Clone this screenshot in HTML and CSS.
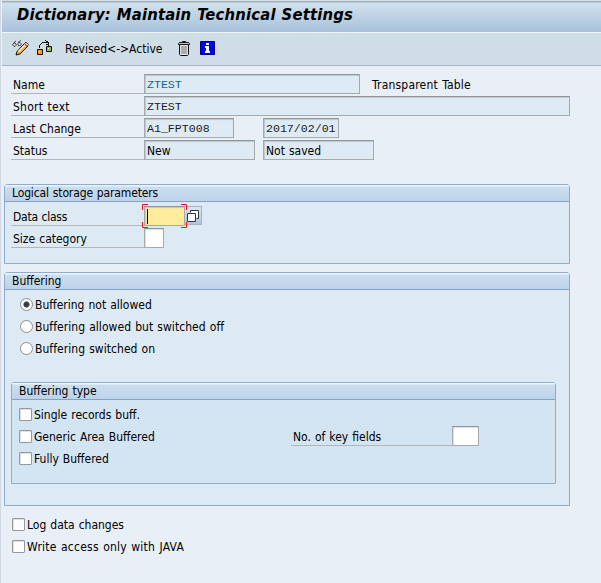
FILE: index.html
```html
<!DOCTYPE html>
<html lang="en">
<head>
<meta charset="utf-8">
<title>Dictionary: Maintain Technical Settings</title>
<link rel="stylesheet" href="styles.css">
</head>
<body>
<main class="window">
  <header class="titlebar"><h1>Dictionary: Maintain Technical Settings</h1></header>
  <nav class="toolbar">
    <svg class="icon edit" width="18" height="16" viewBox="0 0 18 16">
      <path d="M1 5.500a1.500 1.500 0 1 0 3-1.500 1.500 1.500 0 1 0-3 1.500M6 5a1.500 1.500 0 1 0 3-1.500A1.500 1.500 0 1 0 6 5M1.500 3L4 1M6 2.500L9 .5" fill="none" stroke="#333" stroke-width=".9"/>
      <path d="M5 11.500L12.500 3.500l3 3L8 14l-4 1z" fill="#ffa531" stroke="#111"/>
      <path d="M6.500 11.500l7-7" stroke="#fff6cc" stroke-width="1.500"/>
      <path d="M12.500 3.500L14 2l2.500 2.500-1.500 2z" fill="#f3c9c4" stroke="#444"/>
    </svg>
    <svg class="icon relate" width="16" height="16" viewBox="0 0 16 16">
      <path d="M2.500 8V5.500l3-3H11M8.500.5l3 2v3M11.500 5.500L9.500 4" fill="none" stroke="#111" shape-rendering="crispEdges"/>
      <path d="M.5 9.500h5v5h-5z" fill="#ff9e18" stroke="#111"/>
      <path d="M2 11h1v1H2z" fill="#ffe9b0"/>
      <path d="M9.500 6.500h5v5h-5z" fill="#9dba58" stroke="#111"/>
      <path d="M11 8h1v1h-1z" fill="#e9f5c0"/>
    </svg>
    <button class="toggle">Revised&lt;-&gt;Active</button>
    <svg class="icon trash" width="12" height="15" viewBox="0 0 12 15">
      <path d="M1.500 3.500h9v10l-1 1h-7l-1-1z" fill="#e4e4e4" stroke="#111"/>
      <path d="M.5 2.500l1-1h9l1 1v1H.5zM4.500 1.500v-1h3v1" fill="#ccc" stroke="#111"/>
      <path d="M4 5v8M6 5v8M8 5v8" stroke="#777"/>
    </svg>
    <svg class="icon info" width="15" height="14" viewBox="0 0 15 14">
      <path d="M.5.5h14v13H.5z" fill="#00f" stroke="#000080"/>
      <path d="M6 2h3v2H6zM5 5h4v5h1v2H5v-2h1V7H5z" fill="#fff"/>
    </svg>
  </nav>

  <section class="details">
    <div class="row"><label class="label">Name</label><span class="field mono link w-name">ZTEST</span><span class="note">Transparent Table</span></div>
    <div class="row"><label class="label wide">Short text</label><span class="field mono w-text">ZTEST</span></div>
    <div class="row"><label class="label">Last Change</label><span class="field mono w-user">A1_FPT008</span><span class="field mono w-date">2017/02/01</span></div>
    <div class="row"><label class="label">Status</label><span class="field w-status">New</span><span class="field w-saved">Not saved</span></div>
  </section>

  <section class="group storage">
    <h2>Logical storage parameters</h2>
    <div class="group-body">
      <div class="row"><label class="label tight">Data class</label><span class="field focused"><i class="caret"></i>
        <svg class="corners" width="45" height="25" viewBox="0 0 45 25"><path d="M.5 6V.5H6M39 .5h5.500V6M.5 18v5.500H6M39 23.500h5.500V18" fill="none" stroke="#e11422"/></svg></span><button class="match" aria-label="Search"><svg width="12" height="12" viewBox="0 0 12 12"><path d="M3.500 2.500v-2h8v8h-2" fill="#fff" stroke="#333"/><path d="M.5 3.500h8v8h-8z" fill="#fff" stroke="#333"/></svg></button></div>
      <div class="row"><label class="label">Size category</label><span class="field entry w-size"></span></div>
    </div>
  </section>

  <section class="group buffering">
    <h2>Buffering</h2>
    <div class="group-body">
      <label class="option"><i class="radio on"></i><span>Buffering not allowed</span></label>
      <label class="option"><i class="radio"></i><span class="spaced">Buffering allowed but switched off</span></label>
      <label class="option"><i class="radio"></i><span class="spaced">Buffering switched on</span></label>
      <section class="group inner">
        <h2>Buffering type</h2>
        <div class="group-body">
          <label class="option"><i class="check"></i><span>Single records buff.</span></label>
          <div class="split"><label class="option"><i class="check"></i><span>Generic Area Buffered</span></label><label class="label keys">No. of key fields</label><span class="field entry w-keys"></span></div>
          <label class="option"><i class="check"></i><span>Fully Buffered</span></label>
        </div>
      </section>
    </div>
  </section>

  <section class="footer">
    <label class="option"><i class="check"></i><span>Log data changes</span></label>
    <label class="option"><i class="check"></i><span class="wide">Write access only with JAVA</span></label>
  </section>
</main>
</body>
</html>
```
FILE: styles.css
```css
* { box-sizing: border-box; }
body {
  margin: 0;
  background: #e8eff6;
  color: #000;
  font: 12px/16px "DejaVu Sans Condensed", "DejaVu Sans", sans-serif;
  font-stretch: condensed;
  white-space: nowrap;
  word-spacing: .6px;
}
h1, h2 { margin: 0; font-weight: normal; }
button { font: inherit; color: inherit; padding: 0; border: 0; background: none; }
svg { display: block; }
i { display: block; flex: none; }

.window { height: 583px; border-left: 1px solid #d2d8e4; overflow: hidden; }
.titlebar {
  height: 33px;
  margin-left: 1px;
  border-top: 1px solid #d6dfe8;
  border-bottom: 1px solid #edf4fa;
  background: linear-gradient(#a2b0bd 1px, #d1e1ee 2px, #c0d3e4 14px, #a9c2dc);
  padding: 4px 0 0 15px;
}
h1 { font-size: 16.5px; line-height: 20px; font-weight: bold; font-style: italic; letter-spacing: .16px; }
.toolbar {
  display: flex;
  align-items: center;
  height: 33px;
  margin-left: 1px;
  padding-left: 10px;
  background: #cfdde7;
  border-bottom: 1px solid #a2b6c6;
}
.icon { flex: none; margin-bottom: 2px; }
.relate { margin-left: 7px; }
.toggle { width: 98px; margin-left: 12px; text-align: left; }
.trash { margin-left: 15px; }
.info { margin-left: 10px; margin-bottom: 3px; }

.details { padding: 8px 0 0 10px; }
.row { display: flex; height: 20px; margin-bottom: 2px; }
.label { width: 133px; height: 20px; border-bottom: 1px solid #b2b6b9; padding: 3px 0 0 2px; flex: none; }
.wide { letter-spacing: .25px; }
.tight { letter-spacing: -.25px; }
.spaced { letter-spacing: .05px; }
.field {
  flex: none;
  height: 20px;
  padding: 2px 0 0 2px;
  border: 1px solid #a6aaac;
  border-top-color: #929698;
  background: #deebf4;
  box-shadow: inset 1px 1px 1px #bbc8d1;
}
.mono { font-family: "Liberation Mono", monospace; font-size: 11.6px; color: #1c1c1c; }
.link { color: #0b64a5; }
.w-name { width: 216px; }
.w-text { width: 426px; }
.w-user { width: 90px; }
.w-date { width: 76px; margin-left: 29px; }
.w-status { width: 111px; }
.w-saved { width: 111px; margin-left: 8px; }
.note { padding: 3px 0 0 12px; letter-spacing: .2px; }

.group { border: 1px solid #8eadcc; border-radius: 3px 3px 0 0; background: #deeaf3; }
h2 {
  height: 17px;
  padding-left: 7px;
  border-bottom: 1px solid #83a3c4;
  background: linear-gradient(#edf5fc 1px, #cbdeee 2px, #bdd3e8);
  font-size: 12px;
  line-height: 16px;
}
.storage { width: 566px; height: 80px; margin: 24px 0 0 3px; }
.storage h2 { letter-spacing: -.13px; }
.storage .group-body { padding: 4px 0 0 6px; }
.focused { position: relative; width: 41px; background: #ffec9c; }
.caret { width: 1px; height: 15px; background: #000; }
.corners { position: absolute; left: -3px; top: -3px; }
.match {
  display: grid;
  place-items: center;
  width: 17px;
  height: 19px;
  border: 1px solid #aab4be;
  border-left: 0;
  background: linear-gradient(#d9e5f3, #adc5e0);
}
.entry { background: #fff; box-shadow: inset 1px 1px 1px #ddd; }
.w-size { width: 20px; }
.buffering { width: 566px; height: 234px; margin: 8px 0 0 3px; }
.buffering > .group-body { padding: 4px 0 0 6px; }
.option { display: flex; align-items: center; height: 22px; flex: none; }
.radio { width: 13px; height: 13px; margin: 0 2px 1px 9px; border: 1px solid #8b8e91; border-radius: 50%; background: #fff; }
.radio.on { background: radial-gradient(circle, #333d4d 2.500px, #fff 3.500px); }
.check { width: 13px; height: 13px; margin: 0 2px 1px 0; border: 1px solid #96999c; border-radius: 1px; background: #fff; box-shadow: inset 1px 1px 1px #ddd; }
.inner { width: 545px; height: 102px; margin-top: 22px; background: #d3e4f2; }
.inner .group-body { padding: 4px 0 0 7px; }
.split { display: flex; width: 500px; }
.split .option { width: 272px; }
.keys { width: 161px; }
.w-keys { width: 27px; }
.footer { padding: 8px 0 0 11px; }
```
